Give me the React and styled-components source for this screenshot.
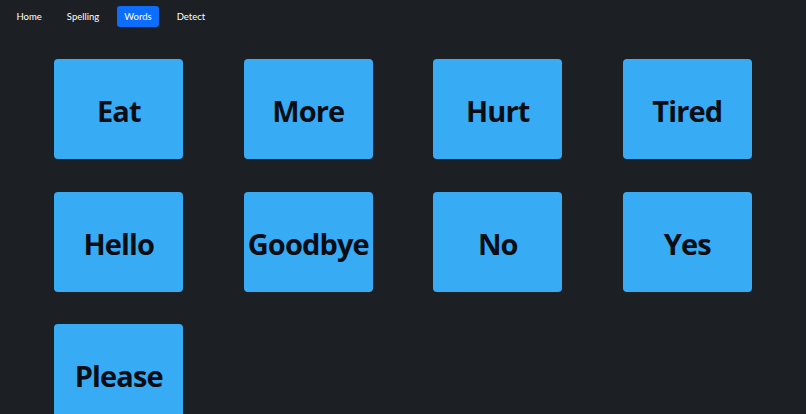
import React, { useState } from 'react'
import styled, { createGlobalStyle } from 'styled-components'

const GlobalStyle = createGlobalStyle`
	html, body {
		margin: 0;
		padding: 0;
		background: #1c1f24;
		font-family: "Open Sans", "Noto Sans", sans-serif;
	}
`

const Page = styled.div`
	min-height: 414px;
	background: #1c1f24;
	overflow: hidden;
`

const Nav = styled.nav`
	display: flex;
	gap: 10px;
	padding: 6px 9px 0;
`

const NavItem = styled.a`
	display: block;
	padding: 0 7.5px;
	height: 21px;
	line-height: 21px;
	border-radius: 3px;
	font-family: Lato, "Open Sans", sans-serif;
	font-size: 9.5px;
	color: #ffffff;
	cursor: pointer;
	background: ${props => props.$active ? '#0d6efd' : 'transparent'};
`

const Grid = styled.div`
	display: grid;
	grid-template-columns: repeat(4, 1fr);
	row-gap: 32.5px;
	width: 758px;
	margin: 32px auto 0;
`

const Card = styled.div`
	justify-self: center;
	width: 129px;
	height: 100px;
	padding-top: 3px;
	box-sizing: border-box;
	border-radius: 4px;
	background: #38abf5;
	display: flex;
	align-items: center;
	justify-content: center;
	color: #0a0e14;
	font-size: 29px;
	font-weight: 700;
	letter-spacing: -0.9px;
`

const words = ['Eat', 'More', 'Hurt', 'Tired', 'Hello', 'Goodbye', 'No', 'Yes', 'Please']
const tabs = ['Home', 'Spelling', 'Words', 'Detect']

const App = () => {
	const [tab, setTab] = useState('Words')

	return (
		<Page>
			<GlobalStyle />
			<Nav>
				{tabs.map(t => (
					<NavItem key={t} $active={t === tab} onClick={() => setTab(t)}>{t}</NavItem>
				))}
			</Nav>
			<Grid>
				{words.map(w => <Card key={w}>{w}</Card>)}
			</Grid>
		</Page>
	)
}

export default App
